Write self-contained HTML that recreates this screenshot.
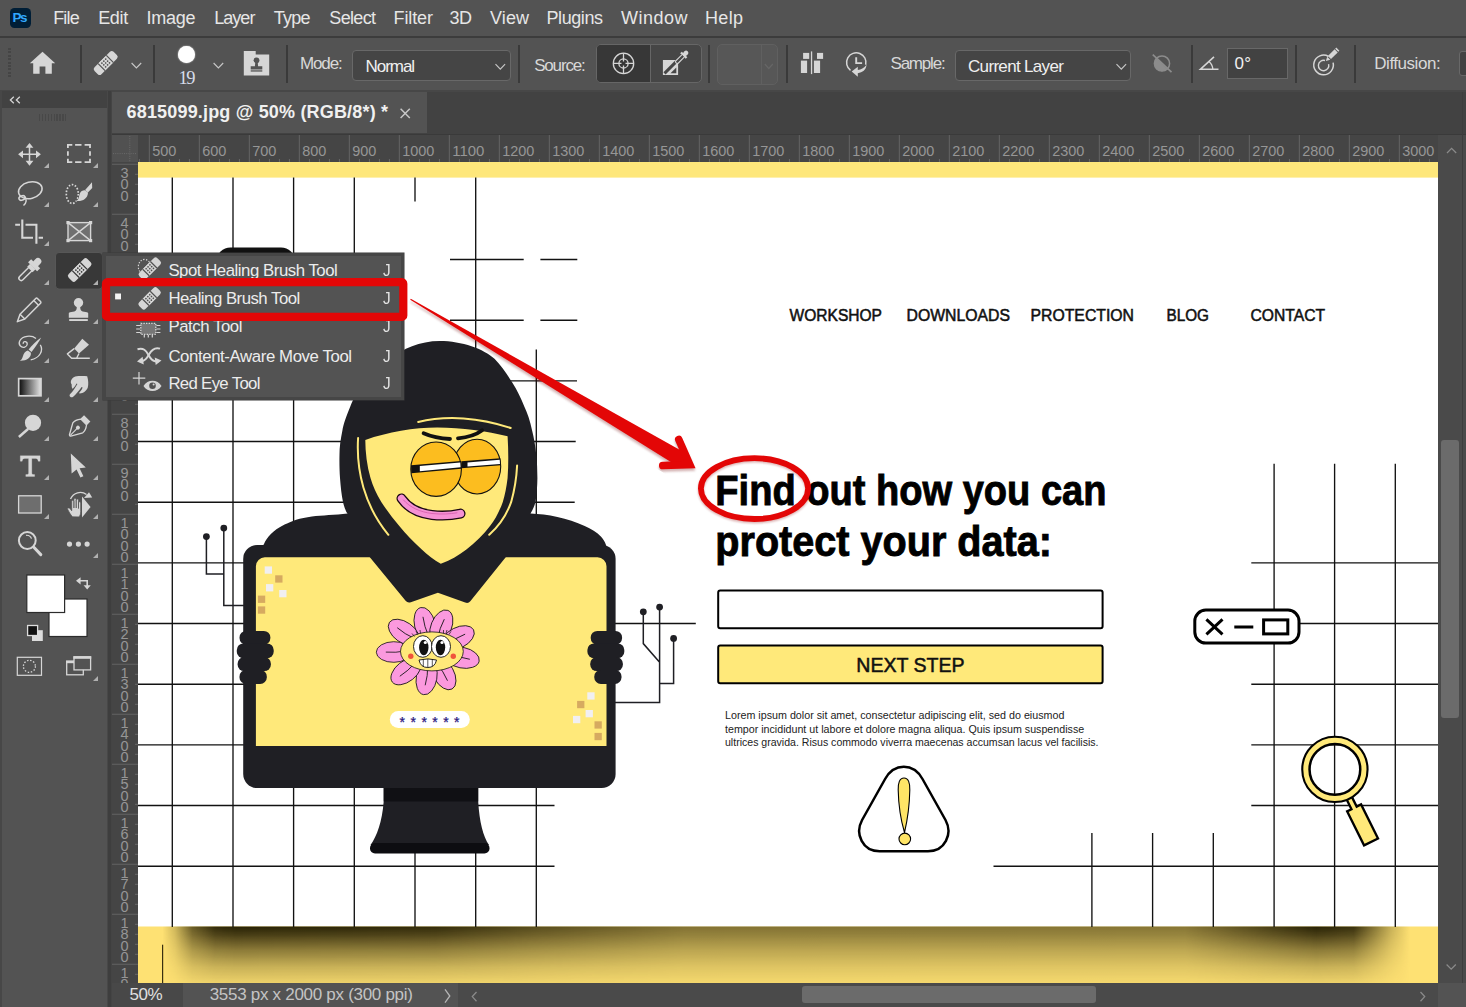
<!DOCTYPE html>
<html lang="en"><head><meta charset="utf-8"><title>Healing Brush Tool</title>
<style>
html,body{margin:0;padding:0;}
body{width:1466px;height:1007px;overflow:hidden;background:#535353;position:relative;font-family:"Liberation Sans",sans-serif;}
.t{position:absolute;white-space:pre;}
.a{position:absolute;}
svg{position:absolute;overflow:visible;}

#menubar{left:0;top:0;width:1466px;height:36px;background:#535353;}
#menuline{left:0;top:36px;width:1466px;height:2px;background:#3c3c3c;}
#optbar{left:0;top:38px;width:1466px;height:52px;background:#535353;}
#optline{left:0;top:90px;width:1466px;height:1.700px;background:#474747;}
#tabbar{left:108px;top:91.700px;width:1358px;height:43.300px;background:#424242;}
#tab{left:111.800px;top:91.700px;width:315.200px;height:41.500px;background:#535353;}
#toolpanel{left:0;top:92px;width:108px;height:915px;background:#535353;}
#toolhead{left:2px;top:90.500px;width:105px;height:17.600px;background:#424242;}
#tooledge{left:106.700px;top:90.500px;width:5.100px;height:917px;background:linear-gradient(90deg,#484848 0 1.500px,#3e3e3e 1.500px 3.600px,#444 3.600px);}
#hruler{left:111.5px;top:135px;width:1326.500px;height:27px;background:#454545;}
#vruler{left:111.5px;top:162px;width:26.500px;height:821px;background:#454545;}
#rcorner{left:111.5px;top:135px;width:26.200px;height:27px;background:#515151;}
#vscroll{left:1438px;top:135px;width:28px;height:848px;background:#4a4a4a;}
#vthumb{left:1441px;top:440px;width:18px;height:278px;background:#6b6b6b;border-radius:3px;}
#status{left:112px;top:983px;width:1354px;height:24px;background:#535353;}
#zoombox{left:112px;top:983px;width:71px;height:24px;background:#484848;}
#hscroll{left:458px;top:983px;width:980px;height:24px;background:#4a4a4a;}
#hthumb{left:802px;top:986px;width:294px;height:17px;background:#6b6b6b;border-radius:3px;}
#scorner{left:1438px;top:983px;width:28px;height:24px;background:#535353;}
.sep{position:absolute;top:45px;width:2px;height:38px;background:#3a3a3a;}
.dd{position:absolute;background:#454545;border:1px solid #686868;border-radius:4px;box-sizing:border-box;}

</style></head><body>
<svg class="a" style="left:138px;top:162px;overflow:hidden" width="1300" height="821" viewBox="138 162 1300 821"><defs><filter id="blur1" x="-10%" y="-100%" width="120%" height="300%"><feGaussianBlur stdDeviation="13"/></filter><clipPath id="bandclip"><rect x="138" y="926.500" width="1300" height="60"/></clipPath></defs><rect x="138" y="162" width="1300" height="821" fill="#fff"/><rect x="138" y="162" width="1300" height="15.600" fill="#fee77b"/><rect x="138" y="926.500" width="1300" height="60" fill="#fee173"/><defs><linearGradient id="shv" x1="0" x2="0" y1="0" y2="1"><stop offset="0" stop-color="#1e1800" stop-opacity="0.960"/><stop offset="0.140" stop-color="#1e1800" stop-opacity="0.820"/><stop offset="0.400" stop-color="#1e1800" stop-opacity="0.520"/><stop offset="0.700" stop-color="#1e1800" stop-opacity="0.240"/><stop offset="1" stop-color="#1e1800" stop-opacity="0.060"/></linearGradient><linearGradient id="shh" x1="0" x2="1" y1="0" y2="0"><stop offset="0.002" stop-color="#fff" stop-opacity="0"/><stop offset="0.012" stop-color="#fff" stop-opacity="0.220"/><stop offset="0.026" stop-color="#fff" stop-opacity="0.700"/><stop offset="0.044" stop-color="#fff" stop-opacity="0.950"/><stop offset="0.060" stop-color="#fff" stop-opacity="1"/><stop offset="0.220" stop-color="#fff" stop-opacity="0.950"/><stop offset="0.300" stop-color="#fff" stop-opacity="0.780"/><stop offset="0.420" stop-color="#fff" stop-opacity="0.580"/><stop offset="0.820" stop-color="#fff" stop-opacity="0.560"/><stop offset="0.895" stop-color="#fff" stop-opacity="0.880"/><stop offset="0.925" stop-color="#fff" stop-opacity="1"/><stop offset="0.955" stop-color="#fff" stop-opacity="0.920"/><stop offset="0.985" stop-color="#fff" stop-opacity="0.250"/><stop offset="1" stop-color="#fff" stop-opacity="0"/></linearGradient><mask id="shm" maskUnits="userSpaceOnUse" x="138" y="900" width="1300" height="100"><rect x="160" y="900" width="1250" height="100" fill="url(#shh)"/></mask></defs><g mask="url(#shm)"><rect x="160" y="926.500" width="1250" height="58" fill="url(#shv)"/></g><rect x="162" y="944.700" width="1.200" height="40" fill="#3a3010"/><g stroke="#121212" stroke-width="1.350" fill="none"><path d="M172.3 177.6V927.0"/><path d="M233.0 177.6V927.0"/><path d="M293.6 177.6V927.0"/><path d="M354.3 177.6V927.0"/><path d="M415.0 177.6V201.5"/><path d="M415.0 780.0V927.0"/><path d="M475.7 177.6V927.0"/><path d="M536.3 349.4V927.0"/><path d="M450.0 259.5H523.7"/><path d="M540.4 259.5H577.3"/><path d="M450.0 320.2H523.7"/><path d="M540.4 320.2H577.3"/><path d="M497.0 380.8H577.0"/><path d="M138.0 441.5H575.7"/><path d="M138.0 502.2H574.7"/><path d="M138.0 562.9H300.0"/><path d="M138.0 623.5H300.0"/><path d="M138.0 684.2H300.0"/><path d="M138.0 744.9H300.0"/><path d="M600.0 623.5H695.8"/><path d="M138.0 805.5H554.5"/><path d="M138.0 866.2H554.5"/><path d="M1274.1 463.7V927.0"/><path d="M1334.6 463.7V927.0"/><path d="M1395.3 463.7V927.0"/><path d="M1091.9 833.0V927.0"/><path d="M1152.6 833.0V927.0"/><path d="M1213.3 833.0V927.0"/><path d="M1251.3 562.9H1438.0"/><path d="M1251.3 623.5H1438.0"/><path d="M1251.3 684.2H1438.0"/><path d="M1251.3 744.9H1438.0"/><path d="M1251.3 805.5H1438.0"/><path d="M993.5 866.2H1438.0"/></g><rect x="216.500" y="247.500" width="78.500" height="30" rx="14" fill="#111"/><g stroke="#1f1f24" stroke-width="1.500" fill="none"><path d="M206.400 536.600V574H223.800M223.800 528.100V605.400H259"/><path d="M643.300 611.800V643.600L659.600 662.300M659.600 607.100V702.600H601M673.600 638.400V683.500H659.600"/></g><circle cx="206.4" cy="536.6" r="3.400" fill="#1f1f24"/><circle cx="223.8" cy="528.1" r="3.400" fill="#1f1f24"/><circle cx="643.3" cy="611.8" r="3.400" fill="#1f1f24"/><circle cx="659.6" cy="607.1" r="3.400" fill="#1f1f24"/><circle cx="673.6" cy="638.4" r="3.400" fill="#1f1f24"/><path d="M383.700 786H478.200V801.500C479.500 822 483 836 489 845H370.500C377 836 382 822 383.700 801.500Z" fill="#1f1f24"/><rect x="383.700" y="786" width="94.500" height="15.500" fill="#101014"/><rect x="370" y="843" width="119.500" height="10.400" rx="5" fill="#0d0d11"/><path d="M439.700 341C420 341 402 349 390.800 358.800C378 370 370 377 364.600 382.700C357 392 353 399 350.300 406.500C346 417 343.500 424 342.400 430.400C340.500 440 339.500 447 339.500 454.200C339.300 463 339.500 471 340 478C340.700 487 341.500 495 343 501.900C344.200 507 346 512 347.600 513.600C335 515 322 515.500 311.900 516.400C300 518 291 521 284.600 524.600C278 528 274 531 270.900 534.100C267.500 537.500 265.500 540.500 264.100 543.700L255 560H610L606 545C605 542 603.500 539.500 601.100 536.800C597 532 591 528.500 584.700 525.900C576 522 567 519 557.400 516.900C548 515 539 514 530.500 513.600C533 509 534.500 506 535.500 501.900C536.800 494 537.300 486 537.400 478C537.400 470 537 462 536.200 454.200C535.400 446 534 438 532.100 430.400C530 421 527.500 413 524.300 406.500C521 398 517 390 512.400 382.700C507.500 375 501.500 366 494.500 358.800C484 349 462 341 439.700 341Z" fill="#1f1f24"/><rect x="243.200" y="545" width="372.400" height="243" rx="14" fill="#1f1f24"/><path d="M255.900 745.900V566.300a9 9 0 0 1 9-9H597.500a9 9 0 0 1 9 9V745.900Z" fill="#ffe97a"/><rect x="239.5" y="630.9" width="30.9" height="13.7" rx="6.600" fill="#1f1f24"/><rect x="236.8" y="643.4" width="36.9" height="14.9" rx="6.600" fill="#1f1f24"/><rect x="237.6" y="657.1" width="33.3" height="14.0" rx="6.600" fill="#1f1f24"/><rect x="239.5" y="669.9" width="27.3" height="14.1" rx="6.600" fill="#1f1f24"/><rect x="590.7" y="630.9" width="31.4" height="13.7" rx="6.600" fill="#1f1f24"/><rect x="587.4" y="643.4" width="36.9" height="14.9" rx="6.600" fill="#1f1f24"/><rect x="590.2" y="657.1" width="32.7" height="14.0" rx="6.600" fill="#1f1f24"/><rect x="594.3" y="669.9" width="27.2" height="14.1" rx="6.600" fill="#1f1f24"/><path d="M368 555L405.600 600.800Q407.600 603.300 410.800 602.200L437.900 592.800L465.200 602.600Q468.300 603.800 470.300 601.200L507.500 555Z" fill="#1f1f24"/><path d="M365.300 439.900C388 432 414 427.500 437.300 427.500C462 427.500 487 431 507.600 436.300C508.500 451 508.500 465 507.600 478C506.500 487 505 495 502.800 501.900C499.500 511 495.500 519 490.200 525.700C483.500 534.500 475.500 542.500 466.400 549.500C458.500 555.500 450 560.500 440.800 563.800C434 560 427.500 555 421.800 549.500C413.500 542 406 534 399.100 525.700C392.500 518 386.500 510 381.300 501.900C376.500 494 372.800 486 370.500 478C367 466 365.300 452 365.300 439.900Z" fill="#ffe97a"/><g stroke="#ffe97a" stroke-width="2" fill="none" stroke-linecap="round"><path d="M418.200 422C432 418.500 448 417.500 463.500 418.400C480 419.500 496 423 510.700 428"/><path d="M358.100 438C357 455 359 472 363.400 487.600C368.500 505 377 521 388.400 534.800"/><path d="M517.100 465.600C516.500 478 514.500 490 511.200 501.900C507 514 499.500 525.500 489.200 534.800"/></g><ellipse cx="477.100" cy="466.600" rx="23.600" ry="27.400" fill="#fcbd1f" stroke="#111" stroke-width="1.100"/><ellipse cx="436.100" cy="469.200" rx="25.300" ry="27.200" fill="#fcbd1f" stroke="#111" stroke-width="1.100"/><path d="M461.300 461.300L500.400 458.300L500.700 465.300L461.300 468.300Z" fill="#111"/><path d="M467.500 462.400L499.700 459.800L500 463.900L467.500 466.600Z" fill="#fff"/><path d="M411 465.200L461 460.900L461.300 468.700L411.300 473.300Z" fill="#111"/><path d="M419.800 466L460.300 462.400L460.600 467.300L419.800 471.300Z" fill="#fff"/><path d="M423.600 433.200C431 436.500 440 438.500 450 439" stroke="#111" stroke-width="3.800" fill="none" stroke-linecap="round"/><path d="M458 438.400C467 437.500 476 435 482.200 430.300" stroke="#111" stroke-width="3.800" fill="none" stroke-linecap="round"/><path d="M401.500 498.500C408 508 420 513.500 432 515C442 516.200 452 515.500 460.500 513.600" stroke="#1a0612" stroke-width="10" fill="none" stroke-linecap="round"/><path d="M401.500 498.500C408 508 420 513.500 432 515C442 516.200 452 515.500 460.500 513.600" stroke="#f591d3" stroke-width="7.400" fill="none" stroke-linecap="round"/><path d="M403.500 500C410 507.500 420 512 432 513.500C442 514.500 450 514 457 512.800" stroke="#d860b0" stroke-width="0.900" fill="none" stroke-linecap="round"/><rect x="264.7" y="566.4" width="7.300" height="7.300" fill="#f1eff2"/><rect x="275.2" y="575.3" width="7.300" height="7.300" fill="#d6aa60"/><rect x="266.0" y="584.1" width="7.300" height="7.300" fill="#f1eff2"/><rect x="279.2" y="590.0" width="7.300" height="7.300" fill="#f1eff2"/><rect x="257.9" y="595.6" width="7.300" height="7.300" fill="#d6aa60"/><rect x="257.9" y="606.4" width="7.300" height="7.300" fill="#d6aa60"/><rect x="587.3" y="692.3" width="7.300" height="7.300" fill="#f1eff2"/><rect x="577.1" y="700.9" width="7.300" height="7.300" fill="#d6aa60"/><rect x="585.6" y="710.0" width="7.300" height="7.300" fill="#f1eff2"/><rect x="573.0" y="715.9" width="7.300" height="7.300" fill="#f1eff2"/><rect x="594.5" y="721.3" width="7.300" height="7.300" fill="#d6aa60"/><rect x="594.5" y="732.9" width="7.300" height="7.300" fill="#d6aa60"/><g stroke="#111" stroke-width="0.800"><g transform="translate(424.8 624.6) rotate(-103.3)"><ellipse cx="0" cy="0" rx="17.500" ry="10.300" fill="#fb99de"/><path d="M-12 1Q-2 -1 8 0" fill="none"/></g><g transform="translate(441.3 626.6) rotate(-67.9)"><ellipse cx="0" cy="0" rx="17.500" ry="10.300" fill="#fb99de"/><path d="M-12 1Q-2 -1 8 0" fill="none"/></g><g transform="translate(458.0 637.8) rotate(-27.0)"><ellipse cx="0" cy="0" rx="17.500" ry="10.300" fill="#fb99de"/><path d="M-12 1Q-2 -1 8 0" fill="none"/></g><g transform="translate(462.0 657.7) rotate(11.4)"><ellipse cx="0" cy="0" rx="17.500" ry="10.300" fill="#fb99de"/><path d="M-12 1Q-2 -1 8 0" fill="none"/></g><g transform="translate(443.6 673.7) rotate(60.9)"><ellipse cx="0" cy="0" rx="17.500" ry="10.300" fill="#fb99de"/><path d="M-12 1Q-2 -1 8 0" fill="none"/></g><g transform="translate(426.6 677.4) rotate(100.1)"><ellipse cx="0" cy="0" rx="17.500" ry="10.300" fill="#fb99de"/><path d="M-12 1Q-2 -1 8 0" fill="none"/></g><g transform="translate(406.1 671.3) rotate(141.8)"><ellipse cx="0" cy="0" rx="17.500" ry="10.300" fill="#fb99de"/><path d="M-12 1Q-2 -1 8 0" fill="none"/></g><g transform="translate(393.8 652.0) rotate(179.3)"><ellipse cx="0" cy="0" rx="17.500" ry="10.300" fill="#fb99de"/><path d="M-12 1Q-2 -1 8 0" fill="none"/></g><g transform="translate(403.8 632.3) rotate(-145.0)"><ellipse cx="0" cy="0" rx="17.500" ry="10.300" fill="#fb99de"/><path d="M-12 1Q-2 -1 8 0" fill="none"/></g><ellipse cx="431.900" cy="651.400" rx="31.400" ry="19.500" fill="#ffe97a"/></g><ellipse cx="422.800" cy="646.500" rx="9.300" ry="10.800" fill="#fff" stroke="#111" stroke-width="0.900"/><ellipse cx="441" cy="646.500" rx="9.500" ry="10.800" fill="#fff" stroke="#111" stroke-width="0.900"/><ellipse cx="423.800" cy="647.500" rx="4.700" ry="7.800" fill="#111"/><ellipse cx="440.500" cy="647.500" rx="4.700" ry="7.800" fill="#111"/><circle cx="425.300" cy="642.500" r="1.600" fill="#fff"/><circle cx="442" cy="642.500" r="1.600" fill="#fff"/><path d="M414.500 636.500l-2.500-3M417.500 634.500l-1.500-3.500M420.500 633.500l-0.500-3.500M449 634.500l2-3.200M446 633.500l1-3.500M443.500 633.500l0-3.500" stroke="#111" stroke-width="0.700" fill="none"/><circle cx="410.800" cy="656.200" r="2.700" fill="#f0543c"/><circle cx="453.300" cy="656.200" r="2.700" fill="#f0543c"/><path d="M419 660Q428 657.800 436.500 660Q435 667.500 427.800 667.500Q420.500 667.500 419 660Z" fill="#fff" stroke="#111" stroke-width="0.900"/><path d="M423.300 659.300V666.300M427.800 659V667.500M432.300 659.300V666.300" stroke="#111" stroke-width="0.700"/><rect x="389.800" y="711.100" width="80" height="17" rx="8.500" fill="#fff"/><text x="399.600" y="726.700" font-family="Liberation Sans, sans-serif" font-size="14" fill="#2c1a80" stroke="#2c1a80" stroke-width="0.250" textLength="59.950" lengthAdjust="spacing">******</text><text x="789.5" y="321.0" font-family="Liberation Sans, sans-serif" font-size="16.8" fill="#111" textLength="92.5" lengthAdjust="spacingAndGlyphs" stroke="#111" stroke-width="0.550">WORKSHOP</text><text x="906.5" y="321.0" font-family="Liberation Sans, sans-serif" font-size="16.8" fill="#111" textLength="103.5" lengthAdjust="spacingAndGlyphs" stroke="#111" stroke-width="0.550">DOWNLOADS</text><text x="1030.5" y="321.0" font-family="Liberation Sans, sans-serif" font-size="16.8" fill="#111" textLength="103.5" lengthAdjust="spacingAndGlyphs" stroke="#111" stroke-width="0.550">PROTECTION</text><text x="1166.5" y="321.0" font-family="Liberation Sans, sans-serif" font-size="16.8" fill="#111" textLength="42.5" lengthAdjust="spacingAndGlyphs" stroke="#111" stroke-width="0.550">BLOG</text><text x="1250.5" y="321.0" font-family="Liberation Sans, sans-serif" font-size="16.8" fill="#111" textLength="74.5" lengthAdjust="spacingAndGlyphs" stroke="#111" stroke-width="0.550">CONTACT</text><text x="715.3" y="505.1" font-family="Liberation Sans, sans-serif" font-size="43" font-weight="bold" fill="#000" textLength="391.2" lengthAdjust="spacingAndGlyphs" stroke="#000" stroke-width="0.900">Find out how you can</text><text x="715.3" y="555.6" font-family="Liberation Sans, sans-serif" font-size="43" font-weight="bold" fill="#000" textLength="336.6" lengthAdjust="spacingAndGlyphs" stroke="#000" stroke-width="0.900">protect your data:</text><rect x="718.200" y="590.600" width="384.400" height="37.600" rx="2" fill="#fff" stroke="#000" stroke-width="2"/><rect x="718.200" y="645.600" width="384.400" height="37.600" rx="2" fill="#ffe97a" stroke="#000" stroke-width="2"/><text x="856.3" y="671.5" font-family="Liberation Sans, sans-serif" font-size="19.5" fill="#111" textLength="108.2" lengthAdjust="spacingAndGlyphs" stroke="#111" stroke-width="0.500">NEXT STEP</text><text x="725.0" y="719.0" font-family="Liberation Sans, sans-serif" font-size="10.4" fill="#222" textLength="339.4" lengthAdjust="spacingAndGlyphs" >Lorem ipsum dolor sit amet, consectetur adipiscing elit, sed do eiusmod</text><text x="725.0" y="732.7" font-family="Liberation Sans, sans-serif" font-size="10.4" fill="#222" textLength="359.2" lengthAdjust="spacingAndGlyphs" >tempor incididunt ut labore et dolore magna aliqua. Quis ipsum suspendisse</text><text x="725.0" y="746.2" font-family="Liberation Sans, sans-serif" font-size="10.4" fill="#222" textLength="373.5" lengthAdjust="spacingAndGlyphs" >ultrices gravida. Risus commodo viverra maecenas accumsan lacus vel facilisis.</text><path d="M903.800 766.800C912 766.800 918 771 922.500 779L945.500 820C953 834 945 851.300 928 851.300H879.600C862.600 851.300 854.600 834 862.100 820L885.100 779C889.600 771 895.600 766.800 903.800 766.800Z" fill="#fff" stroke="#000" stroke-width="2.500"/><path d="M904 778C908.500 778 910 783 909.800 790C909.500 806 906.500 824 904.500 832.500C902 824 898.500 806 898.200 790C898 783 899.500 778 904 778Z" fill="#ffe566" stroke="#000" stroke-width="1.100"/><circle cx="904.800" cy="838.900" r="5.800" fill="#ffe566" stroke="#000" stroke-width="1.100"/><rect x="1194.800" y="610.100" width="104.200" height="33" rx="11" fill="#fff" stroke="#000" stroke-width="3"/><path d="M1206.400 619.400L1222.500 634.400M1222.500 619.400L1206.400 634.400M1234.300 626.900H1253.300" stroke="#000" stroke-width="3" fill="none"/><rect x="1263.600" y="619.900" width="24.200" height="14" fill="#fff" stroke="#000" stroke-width="3"/><g transform="translate(1334.900 769.400)"><g transform="rotate(-26.500)"><path d="M-2.900 28V43H-7.800V81H7.800V43H2.900V28Z" fill="#ffe97a" stroke="#000" stroke-width="2.300" stroke-linejoin="miter"/></g><circle r="28.900" fill="none" stroke="#000" stroke-width="9.600"/><circle r="29.100" fill="none" stroke="#ffe97a" stroke-width="5"/></g></svg>
<div class="a" id="menubar"></div><div class="a" id="menuline"></div>
<div class="a" id="optbar"></div><div class="a" id="optline"></div>
<div class="a" style="left:9.5px;top:7.5px;width:21px;height:20px;border-radius:4.5px;background:#001e36;"></div>
<span class="t" style="left:12.6px;top:11.2px;font-size:13.5px;line-height:13.5px;color:#31a8ff;letter-spacing:-1.51px;font-family:'Liberation Sans',sans-serif;font-weight:bold;">Ps</span>
<span class="t" style="left:53.2px;top:8.8px;font-size:18px;line-height:18px;color:#e6e6e6;letter-spacing:-0.84px;font-family:'Liberation Sans',sans-serif;">File</span>
<span class="t" style="left:98.2px;top:8.8px;font-size:18px;line-height:18px;color:#e6e6e6;letter-spacing:-0.34px;font-family:'Liberation Sans',sans-serif;">Edit</span>
<span class="t" style="left:146.5px;top:8.8px;font-size:18px;line-height:18px;color:#e6e6e6;letter-spacing:-0.28px;font-family:'Liberation Sans',sans-serif;">Image</span>
<span class="t" style="left:214.2px;top:8.8px;font-size:18px;line-height:18px;color:#e6e6e6;letter-spacing:-0.96px;font-family:'Liberation Sans',sans-serif;">Layer</span>
<span class="t" style="left:273.7px;top:8.8px;font-size:18px;line-height:18px;color:#e6e6e6;letter-spacing:-0.74px;font-family:'Liberation Sans',sans-serif;">Type</span>
<span class="t" style="left:329.3px;top:8.8px;font-size:18px;line-height:18px;color:#e6e6e6;letter-spacing:-0.67px;font-family:'Liberation Sans',sans-serif;">Select</span>
<span class="t" style="left:393.5px;top:8.8px;font-size:18px;line-height:18px;color:#e6e6e6;letter-spacing:-0.10px;font-family:'Liberation Sans',sans-serif;">Filter</span>
<span class="t" style="left:449.5px;top:8.8px;font-size:18px;line-height:18px;color:#e6e6e6;letter-spacing:-0.51px;font-family:'Liberation Sans',sans-serif;">3D</span>
<span class="t" style="left:490.0px;top:8.8px;font-size:18px;line-height:18px;color:#e6e6e6;letter-spacing:0.10px;font-family:'Liberation Sans',sans-serif;">View</span>
<span class="t" style="left:546.5px;top:8.8px;font-size:18px;line-height:18px;color:#e6e6e6;letter-spacing:-0.42px;font-family:'Liberation Sans',sans-serif;">Plugins</span>
<span class="t" style="left:621.0px;top:8.8px;font-size:18px;line-height:18px;color:#e6e6e6;letter-spacing:0.50px;font-family:'Liberation Sans',sans-serif;">Window</span>
<span class="t" style="left:705.0px;top:8.8px;font-size:18px;line-height:18px;color:#e6e6e6;letter-spacing:0.33px;font-family:'Liberation Sans',sans-serif;">Help</span>
<div class="sep" style="left:80px"></div>
<div class="sep" style="left:153px"></div>
<div class="sep" style="left:285.5px"></div>
<div class="sep" style="left:518px"></div>
<div class="sep" style="left:708px"></div>
<div class="sep" style="left:785.5px"></div>
<div class="sep" style="left:1190.5px"></div>
<div class="sep" style="left:1295px"></div>
<div class="sep" style="left:1353.5px"></div>
<div class="a" style="left:8px;top:48px;width:3px;height:31px;background:repeating-linear-gradient(#454545 0 2px,#535353 2px 3.4px);"></div>
<span class="t" style="left:178.6px;top:68.7px;font-size:18.5px;line-height:18.5px;color:#d6dcea;letter-spacing:-1.70px;font-family:'Liberation Serif',serif;">19</span>
<div class="a" style="left:177.7px;top:45.8px;width:17.4px;height:17.4px;border-radius:50%;background:#fff;box-shadow:0 0 1.5px #fff;"></div>
<span class="t" style="left:300.0px;top:54.9px;font-size:17px;line-height:17px;color:#d8d8d8;letter-spacing:-1.14px;font-family:'Liberation Sans',sans-serif;">Mode:</span>
<div class="dd" style="left:352px;top:50px;width:159px;height:31px;"></div>
<span class="t" style="left:365.5px;top:57.9px;font-size:17px;line-height:17px;color:#f0f0f0;letter-spacing:-1.04px;font-family:'Liberation Sans',sans-serif;">Normal</span>
<span class="t" style="left:534.2px;top:57.1px;font-size:17px;line-height:17px;color:#d8d8d8;letter-spacing:-1.18px;font-family:'Liberation Sans',sans-serif;">Source:</span>
<div class="a" style="left:596px;top:44px;width:106px;height:39px;border-radius:5px;background:#464646;border:1px solid #666;box-sizing:border-box;overflow:hidden;"><div style="position:absolute;left:0;top:0;width:52.500px;height:39px;background:#373737;border-right:1px solid #666;"></div></div>
<div class="a" style="left:717px;top:43.5px;width:61px;height:41px;border-radius:5px;background:#575757;border:1px solid #606060;box-sizing:border-box;"><div style="position:absolute;left:42.5px;top:0;width:1px;height:39px;background:#606060;"></div></div>
<span class="t" style="left:890.5px;top:54.9px;font-size:17px;line-height:17px;color:#d8d8d8;letter-spacing:-1.21px;font-family:'Liberation Sans',sans-serif;">Sample:</span>
<div class="dd" style="left:955px;top:50px;width:176px;height:31px;"></div>
<span class="t" style="left:968.0px;top:57.9px;font-size:17px;line-height:17px;color:#f0f0f0;letter-spacing:-0.67px;font-family:'Liberation Sans',sans-serif;">Current Layer</span>
<div class="a" style="left:1227px;top:48px;width:61px;height:31px;background:#424242;border:1px solid #686868;box-sizing:border-box;"></div>
<span class="t" style="left:1234.4px;top:54.9px;font-size:17px;line-height:17px;color:#f0f0f0;letter-spacing:0.35px;font-family:'Liberation Sans',sans-serif;">0°</span>
<span class="t" style="left:1374.3px;top:54.9px;font-size:17px;line-height:17px;color:#d8d8d8;letter-spacing:-0.47px;font-family:'Liberation Sans',sans-serif;">Diffusion:</span>
<div class="a" style="left:1459px;top:51px;width:12px;height:25px;background:#424242;border:1px solid #686868;border-radius:3px;box-sizing:border-box;"></div>
<div class="a" id="tabbar"></div><div class="a" id="tab"></div>
<span class="t" style="left:126.5px;top:102.7px;font-size:18px;line-height:18px;color:#f0f0f0;letter-spacing:0.18px;font-family:'Liberation Sans',sans-serif;font-weight:bold;">6815099.jpg @ 50% (RGB/8*) *</span>
<div class="a" id="toolpanel"></div><div class="a" id="tooledge"></div><div class="a" id="toolhead"></div>
<svg class="a" style="left:0;top:0" width="40" height="110"><path d="M13.800 96.800l-3.400 3.200 3.400 3.200M19.800 96.800l-3.400 3.200 3.400 3.200" stroke="#d4d4d4" stroke-width="1.300" fill="none"/></svg>
<div class="a" style="left:38.500px;top:113.500px;width:29px;height:7px;background:repeating-linear-gradient(90deg,#484848 0 1.3px,#535353 1.3px 2.9px);"></div>
<div class="a" id="hruler"></div><div class="a" id="vruler"></div><div class="a" id="rcorner"></div>
<svg class="a" style="left:0;top:0" width="1466" height="1007" viewBox="0 0 1466 1007"><rect x="148.8" y="135" width="1.2" height="27" fill="#5e5e5e"/><text x="152.2" y="156.0" font-family="Liberation Sans, sans-serif" font-size="15.5" fill="#969696" textLength="24.2" lengthAdjust="spacingAndGlyphs" >500</text><rect x="158.9" y="159" width="1" height="3" fill="#686868"/><rect x="168.9" y="159" width="1" height="3" fill="#686868"/><rect x="178.9" y="159" width="1" height="3" fill="#686868"/><rect x="188.9" y="159" width="1" height="3" fill="#686868"/><rect x="198.8" y="135" width="1.2" height="27" fill="#5e5e5e"/><text x="202.2" y="156.0" font-family="Liberation Sans, sans-serif" font-size="15.5" fill="#969696" textLength="24.2" lengthAdjust="spacingAndGlyphs" >600</text><rect x="208.9" y="159" width="1" height="3" fill="#686868"/><rect x="218.9" y="159" width="1" height="3" fill="#686868"/><rect x="228.9" y="159" width="1" height="3" fill="#686868"/><rect x="238.9" y="159" width="1" height="3" fill="#686868"/><rect x="248.8" y="135" width="1.2" height="27" fill="#5e5e5e"/><text x="252.2" y="156.0" font-family="Liberation Sans, sans-serif" font-size="15.5" fill="#969696" textLength="24.2" lengthAdjust="spacingAndGlyphs" >700</text><rect x="258.9" y="159" width="1" height="3" fill="#686868"/><rect x="268.9" y="159" width="1" height="3" fill="#686868"/><rect x="278.9" y="159" width="1" height="3" fill="#686868"/><rect x="288.9" y="159" width="1" height="3" fill="#686868"/><rect x="298.8" y="135" width="1.2" height="27" fill="#5e5e5e"/><text x="302.2" y="156.0" font-family="Liberation Sans, sans-serif" font-size="15.5" fill="#969696" textLength="24.1" lengthAdjust="spacingAndGlyphs" >800</text><rect x="308.9" y="159" width="1" height="3" fill="#686868"/><rect x="318.9" y="159" width="1" height="3" fill="#686868"/><rect x="328.9" y="159" width="1" height="3" fill="#686868"/><rect x="338.9" y="159" width="1" height="3" fill="#686868"/><rect x="348.8" y="135" width="1.2" height="27" fill="#5e5e5e"/><text x="352.2" y="156.0" font-family="Liberation Sans, sans-serif" font-size="15.5" fill="#969696" textLength="24.1" lengthAdjust="spacingAndGlyphs" >900</text><rect x="358.9" y="159" width="1" height="3" fill="#686868"/><rect x="368.9" y="159" width="1" height="3" fill="#686868"/><rect x="378.9" y="159" width="1" height="3" fill="#686868"/><rect x="388.9" y="159" width="1" height="3" fill="#686868"/><rect x="398.8" y="135" width="1.2" height="27" fill="#5e5e5e"/><text x="402.2" y="156.0" font-family="Liberation Sans, sans-serif" font-size="15.5" fill="#969696" textLength="32.2" lengthAdjust="spacingAndGlyphs" >1000</text><rect x="408.9" y="159" width="1" height="3" fill="#686868"/><rect x="418.9" y="159" width="1" height="3" fill="#686868"/><rect x="428.9" y="159" width="1" height="3" fill="#686868"/><rect x="438.9" y="159" width="1" height="3" fill="#686868"/><rect x="448.8" y="135" width="1.2" height="27" fill="#5e5e5e"/><text x="452.2" y="156.0" font-family="Liberation Sans, sans-serif" font-size="15.5" fill="#969696" textLength="32.2" lengthAdjust="spacingAndGlyphs" >1100</text><rect x="458.9" y="159" width="1" height="3" fill="#686868"/><rect x="468.9" y="159" width="1" height="3" fill="#686868"/><rect x="478.9" y="159" width="1" height="3" fill="#686868"/><rect x="488.9" y="159" width="1" height="3" fill="#686868"/><rect x="498.8" y="135" width="1.2" height="27" fill="#5e5e5e"/><text x="502.2" y="156.0" font-family="Liberation Sans, sans-serif" font-size="15.5" fill="#969696" textLength="32.2" lengthAdjust="spacingAndGlyphs" >1200</text><rect x="508.9" y="159" width="1" height="3" fill="#686868"/><rect x="518.9" y="159" width="1" height="3" fill="#686868"/><rect x="528.9" y="159" width="1" height="3" fill="#686868"/><rect x="538.9" y="159" width="1" height="3" fill="#686868"/><rect x="548.8" y="135" width="1.2" height="27" fill="#5e5e5e"/><text x="552.2" y="156.0" font-family="Liberation Sans, sans-serif" font-size="15.5" fill="#969696" textLength="32.2" lengthAdjust="spacingAndGlyphs" >1300</text><rect x="558.9" y="159" width="1" height="3" fill="#686868"/><rect x="568.9" y="159" width="1" height="3" fill="#686868"/><rect x="578.9" y="159" width="1" height="3" fill="#686868"/><rect x="588.9" y="159" width="1" height="3" fill="#686868"/><rect x="598.8" y="135" width="1.2" height="27" fill="#5e5e5e"/><text x="602.2" y="156.0" font-family="Liberation Sans, sans-serif" font-size="15.5" fill="#969696" textLength="32.2" lengthAdjust="spacingAndGlyphs" >1400</text><rect x="608.9" y="159" width="1" height="3" fill="#686868"/><rect x="618.9" y="159" width="1" height="3" fill="#686868"/><rect x="628.9" y="159" width="1" height="3" fill="#686868"/><rect x="638.9" y="159" width="1" height="3" fill="#686868"/><rect x="648.8" y="135" width="1.2" height="27" fill="#5e5e5e"/><text x="652.2" y="156.0" font-family="Liberation Sans, sans-serif" font-size="15.5" fill="#969696" textLength="32.2" lengthAdjust="spacingAndGlyphs" >1500</text><rect x="658.9" y="159" width="1" height="3" fill="#686868"/><rect x="668.9" y="159" width="1" height="3" fill="#686868"/><rect x="678.9" y="159" width="1" height="3" fill="#686868"/><rect x="688.9" y="159" width="1" height="3" fill="#686868"/><rect x="698.8" y="135" width="1.2" height="27" fill="#5e5e5e"/><text x="702.2" y="156.0" font-family="Liberation Sans, sans-serif" font-size="15.5" fill="#969696" textLength="32.2" lengthAdjust="spacingAndGlyphs" >1600</text><rect x="708.9" y="159" width="1" height="3" fill="#686868"/><rect x="718.9" y="159" width="1" height="3" fill="#686868"/><rect x="728.9" y="159" width="1" height="3" fill="#686868"/><rect x="738.9" y="159" width="1" height="3" fill="#686868"/><rect x="748.8" y="135" width="1.2" height="27" fill="#5e5e5e"/><text x="752.2" y="156.0" font-family="Liberation Sans, sans-serif" font-size="15.5" fill="#969696" textLength="32.2" lengthAdjust="spacingAndGlyphs" >1700</text><rect x="758.9" y="159" width="1" height="3" fill="#686868"/><rect x="768.9" y="159" width="1" height="3" fill="#686868"/><rect x="778.9" y="159" width="1" height="3" fill="#686868"/><rect x="788.9" y="159" width="1" height="3" fill="#686868"/><rect x="798.8" y="135" width="1.2" height="27" fill="#5e5e5e"/><text x="802.2" y="156.0" font-family="Liberation Sans, sans-serif" font-size="15.5" fill="#969696" textLength="32.2" lengthAdjust="spacingAndGlyphs" >1800</text><rect x="808.9" y="159" width="1" height="3" fill="#686868"/><rect x="818.9" y="159" width="1" height="3" fill="#686868"/><rect x="828.9" y="159" width="1" height="3" fill="#686868"/><rect x="838.9" y="159" width="1" height="3" fill="#686868"/><rect x="848.8" y="135" width="1.2" height="27" fill="#5e5e5e"/><text x="852.2" y="156.0" font-family="Liberation Sans, sans-serif" font-size="15.5" fill="#969696" textLength="32.2" lengthAdjust="spacingAndGlyphs" >1900</text><rect x="858.9" y="159" width="1" height="3" fill="#686868"/><rect x="868.9" y="159" width="1" height="3" fill="#686868"/><rect x="878.9" y="159" width="1" height="3" fill="#686868"/><rect x="888.9" y="159" width="1" height="3" fill="#686868"/><rect x="898.8" y="135" width="1.2" height="27" fill="#5e5e5e"/><text x="902.2" y="156.0" font-family="Liberation Sans, sans-serif" font-size="15.5" fill="#969696" textLength="32.2" lengthAdjust="spacingAndGlyphs" >2000</text><rect x="908.9" y="159" width="1" height="3" fill="#686868"/><rect x="918.9" y="159" width="1" height="3" fill="#686868"/><rect x="928.9" y="159" width="1" height="3" fill="#686868"/><rect x="938.9" y="159" width="1" height="3" fill="#686868"/><rect x="948.8" y="135" width="1.2" height="27" fill="#5e5e5e"/><text x="952.2" y="156.0" font-family="Liberation Sans, sans-serif" font-size="15.5" fill="#969696" textLength="32.2" lengthAdjust="spacingAndGlyphs" >2100</text><rect x="958.9" y="159" width="1" height="3" fill="#686868"/><rect x="968.9" y="159" width="1" height="3" fill="#686868"/><rect x="978.9" y="159" width="1" height="3" fill="#686868"/><rect x="988.9" y="159" width="1" height="3" fill="#686868"/><rect x="998.8" y="135" width="1.2" height="27" fill="#5e5e5e"/><text x="1002.2" y="156.0" font-family="Liberation Sans, sans-serif" font-size="15.5" fill="#969696" textLength="32.2" lengthAdjust="spacingAndGlyphs" >2200</text><rect x="1008.9" y="159" width="1" height="3" fill="#686868"/><rect x="1018.9" y="159" width="1" height="3" fill="#686868"/><rect x="1028.9" y="159" width="1" height="3" fill="#686868"/><rect x="1038.9" y="159" width="1" height="3" fill="#686868"/><rect x="1048.8" y="135" width="1.2" height="27" fill="#5e5e5e"/><text x="1052.2" y="156.0" font-family="Liberation Sans, sans-serif" font-size="15.5" fill="#969696" textLength="32.2" lengthAdjust="spacingAndGlyphs" >2300</text><rect x="1058.9" y="159" width="1" height="3" fill="#686868"/><rect x="1068.9" y="159" width="1" height="3" fill="#686868"/><rect x="1078.9" y="159" width="1" height="3" fill="#686868"/><rect x="1088.9" y="159" width="1" height="3" fill="#686868"/><rect x="1098.8" y="135" width="1.2" height="27" fill="#5e5e5e"/><text x="1102.2" y="156.0" font-family="Liberation Sans, sans-serif" font-size="15.5" fill="#969696" textLength="32.2" lengthAdjust="spacingAndGlyphs" >2400</text><rect x="1108.9" y="159" width="1" height="3" fill="#686868"/><rect x="1118.9" y="159" width="1" height="3" fill="#686868"/><rect x="1128.9" y="159" width="1" height="3" fill="#686868"/><rect x="1138.9" y="159" width="1" height="3" fill="#686868"/><rect x="1148.8" y="135" width="1.2" height="27" fill="#5e5e5e"/><text x="1152.2" y="156.0" font-family="Liberation Sans, sans-serif" font-size="15.5" fill="#969696" textLength="32.2" lengthAdjust="spacingAndGlyphs" >2500</text><rect x="1158.9" y="159" width="1" height="3" fill="#686868"/><rect x="1168.9" y="159" width="1" height="3" fill="#686868"/><rect x="1178.9" y="159" width="1" height="3" fill="#686868"/><rect x="1188.9" y="159" width="1" height="3" fill="#686868"/><rect x="1198.8" y="135" width="1.2" height="27" fill="#5e5e5e"/><text x="1202.2" y="156.0" font-family="Liberation Sans, sans-serif" font-size="15.5" fill="#969696" textLength="32.2" lengthAdjust="spacingAndGlyphs" >2600</text><rect x="1208.9" y="159" width="1" height="3" fill="#686868"/><rect x="1218.9" y="159" width="1" height="3" fill="#686868"/><rect x="1228.9" y="159" width="1" height="3" fill="#686868"/><rect x="1238.9" y="159" width="1" height="3" fill="#686868"/><rect x="1248.8" y="135" width="1.2" height="27" fill="#5e5e5e"/><text x="1252.2" y="156.0" font-family="Liberation Sans, sans-serif" font-size="15.5" fill="#969696" textLength="32.2" lengthAdjust="spacingAndGlyphs" >2700</text><rect x="1258.9" y="159" width="1" height="3" fill="#686868"/><rect x="1268.9" y="159" width="1" height="3" fill="#686868"/><rect x="1278.9" y="159" width="1" height="3" fill="#686868"/><rect x="1288.9" y="159" width="1" height="3" fill="#686868"/><rect x="1298.8" y="135" width="1.2" height="27" fill="#5e5e5e"/><text x="1302.2" y="156.0" font-family="Liberation Sans, sans-serif" font-size="15.5" fill="#969696" textLength="32.2" lengthAdjust="spacingAndGlyphs" >2800</text><rect x="1308.9" y="159" width="1" height="3" fill="#686868"/><rect x="1318.9" y="159" width="1" height="3" fill="#686868"/><rect x="1328.9" y="159" width="1" height="3" fill="#686868"/><rect x="1338.9" y="159" width="1" height="3" fill="#686868"/><rect x="1348.8" y="135" width="1.2" height="27" fill="#5e5e5e"/><text x="1352.2" y="156.0" font-family="Liberation Sans, sans-serif" font-size="15.5" fill="#969696" textLength="32.2" lengthAdjust="spacingAndGlyphs" >2900</text><rect x="1358.9" y="159" width="1" height="3" fill="#686868"/><rect x="1368.9" y="159" width="1" height="3" fill="#686868"/><rect x="1378.9" y="159" width="1" height="3" fill="#686868"/><rect x="1388.9" y="159" width="1" height="3" fill="#686868"/><rect x="1398.8" y="135" width="1.2" height="27" fill="#5e5e5e"/><text x="1402.2" y="156.0" font-family="Liberation Sans, sans-serif" font-size="15.5" fill="#969696" textLength="32.2" lengthAdjust="spacingAndGlyphs" >3000</text><rect x="1408.9" y="159" width="1" height="3" fill="#686868"/><rect x="1418.9" y="159" width="1" height="3" fill="#686868"/><rect x="1428.9" y="159" width="1" height="3" fill="#686868"/><rect x="138.900" y="159" width="1" height="3" fill="#686868"/><rect x="112" y="163.7" width="26" height="1.2" fill="#5e5e5e"/><text x="120.5" y="177.8" font-family="Liberation Sans, sans-serif" font-size="14.5" fill="#969696" >3</text><text x="120.5" y="189.2" font-family="Liberation Sans, sans-serif" font-size="14.5" fill="#969696" >0</text><text x="120.5" y="200.6" font-family="Liberation Sans, sans-serif" font-size="14.5" fill="#969696" >0</text><rect x="135" y="173.8" width="3" height="1" fill="#686868"/><rect x="135" y="183.8" width="3" height="1" fill="#686868"/><rect x="135" y="193.8" width="3" height="1" fill="#686868"/><rect x="135" y="203.8" width="3" height="1" fill="#686868"/><rect x="112" y="213.7" width="26" height="1.2" fill="#5e5e5e"/><text x="120.5" y="227.8" font-family="Liberation Sans, sans-serif" font-size="14.5" fill="#969696" >4</text><text x="120.5" y="239.2" font-family="Liberation Sans, sans-serif" font-size="14.5" fill="#969696" >0</text><text x="120.5" y="250.6" font-family="Liberation Sans, sans-serif" font-size="14.5" fill="#969696" >0</text><rect x="135" y="223.8" width="3" height="1" fill="#686868"/><rect x="135" y="233.8" width="3" height="1" fill="#686868"/><rect x="135" y="243.8" width="3" height="1" fill="#686868"/><rect x="135" y="253.8" width="3" height="1" fill="#686868"/><rect x="112" y="263.7" width="26" height="1.2" fill="#5e5e5e"/><text x="120.5" y="277.8" font-family="Liberation Sans, sans-serif" font-size="14.5" fill="#969696" >5</text><text x="120.5" y="289.2" font-family="Liberation Sans, sans-serif" font-size="14.5" fill="#969696" >0</text><text x="120.5" y="300.6" font-family="Liberation Sans, sans-serif" font-size="14.5" fill="#969696" >0</text><rect x="135" y="273.8" width="3" height="1" fill="#686868"/><rect x="135" y="283.8" width="3" height="1" fill="#686868"/><rect x="135" y="293.8" width="3" height="1" fill="#686868"/><rect x="135" y="303.8" width="3" height="1" fill="#686868"/><rect x="112" y="313.7" width="26" height="1.2" fill="#5e5e5e"/><text x="120.5" y="327.8" font-family="Liberation Sans, sans-serif" font-size="14.5" fill="#969696" >6</text><text x="120.5" y="339.2" font-family="Liberation Sans, sans-serif" font-size="14.5" fill="#969696" >0</text><text x="120.5" y="350.6" font-family="Liberation Sans, sans-serif" font-size="14.5" fill="#969696" >0</text><rect x="135" y="323.8" width="3" height="1" fill="#686868"/><rect x="135" y="333.8" width="3" height="1" fill="#686868"/><rect x="135" y="343.8" width="3" height="1" fill="#686868"/><rect x="135" y="353.8" width="3" height="1" fill="#686868"/><rect x="112" y="363.7" width="26" height="1.2" fill="#5e5e5e"/><text x="120.5" y="377.8" font-family="Liberation Sans, sans-serif" font-size="14.5" fill="#969696" >7</text><text x="120.5" y="389.2" font-family="Liberation Sans, sans-serif" font-size="14.5" fill="#969696" >0</text><text x="120.5" y="400.6" font-family="Liberation Sans, sans-serif" font-size="14.5" fill="#969696" >0</text><rect x="135" y="373.8" width="3" height="1" fill="#686868"/><rect x="135" y="383.8" width="3" height="1" fill="#686868"/><rect x="135" y="393.8" width="3" height="1" fill="#686868"/><rect x="135" y="403.8" width="3" height="1" fill="#686868"/><rect x="112" y="413.7" width="26" height="1.2" fill="#5e5e5e"/><text x="120.5" y="427.8" font-family="Liberation Sans, sans-serif" font-size="14.5" fill="#969696" >8</text><text x="120.5" y="439.2" font-family="Liberation Sans, sans-serif" font-size="14.5" fill="#969696" >0</text><text x="120.5" y="450.6" font-family="Liberation Sans, sans-serif" font-size="14.5" fill="#969696" >0</text><rect x="135" y="423.8" width="3" height="1" fill="#686868"/><rect x="135" y="433.8" width="3" height="1" fill="#686868"/><rect x="135" y="443.8" width="3" height="1" fill="#686868"/><rect x="135" y="453.8" width="3" height="1" fill="#686868"/><rect x="112" y="463.7" width="26" height="1.2" fill="#5e5e5e"/><text x="120.5" y="477.8" font-family="Liberation Sans, sans-serif" font-size="14.5" fill="#969696" >9</text><text x="120.5" y="489.2" font-family="Liberation Sans, sans-serif" font-size="14.5" fill="#969696" >0</text><text x="120.5" y="500.6" font-family="Liberation Sans, sans-serif" font-size="14.5" fill="#969696" >0</text><rect x="135" y="473.8" width="3" height="1" fill="#686868"/><rect x="135" y="483.8" width="3" height="1" fill="#686868"/><rect x="135" y="493.8" width="3" height="1" fill="#686868"/><rect x="135" y="503.8" width="3" height="1" fill="#686868"/><rect x="112" y="513.7" width="26" height="1.2" fill="#5e5e5e"/><text x="120.5" y="527.8" font-family="Liberation Sans, sans-serif" font-size="14.5" fill="#969696" >1</text><text x="120.5" y="539.2" font-family="Liberation Sans, sans-serif" font-size="14.5" fill="#969696" >0</text><text x="120.5" y="550.6" font-family="Liberation Sans, sans-serif" font-size="14.5" fill="#969696" >0</text><text x="120.5" y="562.0" font-family="Liberation Sans, sans-serif" font-size="14.5" fill="#969696" >0</text><rect x="135" y="523.8" width="3" height="1" fill="#686868"/><rect x="135" y="533.8" width="3" height="1" fill="#686868"/><rect x="135" y="543.8" width="3" height="1" fill="#686868"/><rect x="135" y="553.8" width="3" height="1" fill="#686868"/><rect x="112" y="563.7" width="26" height="1.2" fill="#5e5e5e"/><text x="120.5" y="577.8" font-family="Liberation Sans, sans-serif" font-size="14.5" fill="#969696" >1</text><text x="120.5" y="589.2" font-family="Liberation Sans, sans-serif" font-size="14.5" fill="#969696" >1</text><text x="120.5" y="600.6" font-family="Liberation Sans, sans-serif" font-size="14.5" fill="#969696" >0</text><text x="120.5" y="612.0" font-family="Liberation Sans, sans-serif" font-size="14.5" fill="#969696" >0</text><rect x="135" y="573.8" width="3" height="1" fill="#686868"/><rect x="135" y="583.8" width="3" height="1" fill="#686868"/><rect x="135" y="593.8" width="3" height="1" fill="#686868"/><rect x="135" y="603.8" width="3" height="1" fill="#686868"/><rect x="112" y="613.7" width="26" height="1.2" fill="#5e5e5e"/><text x="120.5" y="627.8" font-family="Liberation Sans, sans-serif" font-size="14.5" fill="#969696" >1</text><text x="120.5" y="639.2" font-family="Liberation Sans, sans-serif" font-size="14.5" fill="#969696" >2</text><text x="120.5" y="650.6" font-family="Liberation Sans, sans-serif" font-size="14.5" fill="#969696" >0</text><text x="120.5" y="662.0" font-family="Liberation Sans, sans-serif" font-size="14.5" fill="#969696" >0</text><rect x="135" y="623.8" width="3" height="1" fill="#686868"/><rect x="135" y="633.8" width="3" height="1" fill="#686868"/><rect x="135" y="643.8" width="3" height="1" fill="#686868"/><rect x="135" y="653.8" width="3" height="1" fill="#686868"/><rect x="112" y="663.7" width="26" height="1.2" fill="#5e5e5e"/><text x="120.5" y="677.8" font-family="Liberation Sans, sans-serif" font-size="14.5" fill="#969696" >1</text><text x="120.5" y="689.2" font-family="Liberation Sans, sans-serif" font-size="14.5" fill="#969696" >3</text><text x="120.5" y="700.6" font-family="Liberation Sans, sans-serif" font-size="14.5" fill="#969696" >0</text><text x="120.5" y="712.0" font-family="Liberation Sans, sans-serif" font-size="14.5" fill="#969696" >0</text><rect x="135" y="673.8" width="3" height="1" fill="#686868"/><rect x="135" y="683.8" width="3" height="1" fill="#686868"/><rect x="135" y="693.8" width="3" height="1" fill="#686868"/><rect x="135" y="703.8" width="3" height="1" fill="#686868"/><rect x="112" y="713.7" width="26" height="1.2" fill="#5e5e5e"/><text x="120.5" y="727.8" font-family="Liberation Sans, sans-serif" font-size="14.5" fill="#969696" >1</text><text x="120.5" y="739.2" font-family="Liberation Sans, sans-serif" font-size="14.5" fill="#969696" >4</text><text x="120.5" y="750.6" font-family="Liberation Sans, sans-serif" font-size="14.5" fill="#969696" >0</text><text x="120.5" y="762.0" font-family="Liberation Sans, sans-serif" font-size="14.5" fill="#969696" >0</text><rect x="135" y="723.8" width="3" height="1" fill="#686868"/><rect x="135" y="733.8" width="3" height="1" fill="#686868"/><rect x="135" y="743.8" width="3" height="1" fill="#686868"/><rect x="135" y="753.8" width="3" height="1" fill="#686868"/><rect x="112" y="763.7" width="26" height="1.2" fill="#5e5e5e"/><text x="120.5" y="777.8" font-family="Liberation Sans, sans-serif" font-size="14.5" fill="#969696" >1</text><text x="120.5" y="789.2" font-family="Liberation Sans, sans-serif" font-size="14.5" fill="#969696" >5</text><text x="120.5" y="800.6" font-family="Liberation Sans, sans-serif" font-size="14.5" fill="#969696" >0</text><text x="120.5" y="812.0" font-family="Liberation Sans, sans-serif" font-size="14.5" fill="#969696" >0</text><rect x="135" y="773.8" width="3" height="1" fill="#686868"/><rect x="135" y="783.8" width="3" height="1" fill="#686868"/><rect x="135" y="793.8" width="3" height="1" fill="#686868"/><rect x="135" y="803.8" width="3" height="1" fill="#686868"/><rect x="112" y="813.7" width="26" height="1.2" fill="#5e5e5e"/><text x="120.5" y="827.8" font-family="Liberation Sans, sans-serif" font-size="14.5" fill="#969696" >1</text><text x="120.5" y="839.2" font-family="Liberation Sans, sans-serif" font-size="14.5" fill="#969696" >6</text><text x="120.5" y="850.6" font-family="Liberation Sans, sans-serif" font-size="14.5" fill="#969696" >0</text><text x="120.5" y="862.0" font-family="Liberation Sans, sans-serif" font-size="14.5" fill="#969696" >0</text><rect x="135" y="823.8" width="3" height="1" fill="#686868"/><rect x="135" y="833.8" width="3" height="1" fill="#686868"/><rect x="135" y="843.8" width="3" height="1" fill="#686868"/><rect x="135" y="853.8" width="3" height="1" fill="#686868"/><rect x="112" y="863.7" width="26" height="1.2" fill="#5e5e5e"/><text x="120.5" y="877.8" font-family="Liberation Sans, sans-serif" font-size="14.5" fill="#969696" >1</text><text x="120.5" y="889.2" font-family="Liberation Sans, sans-serif" font-size="14.5" fill="#969696" >7</text><text x="120.5" y="900.6" font-family="Liberation Sans, sans-serif" font-size="14.5" fill="#969696" >0</text><text x="120.5" y="912.0" font-family="Liberation Sans, sans-serif" font-size="14.5" fill="#969696" >0</text><rect x="135" y="873.8" width="3" height="1" fill="#686868"/><rect x="135" y="883.8" width="3" height="1" fill="#686868"/><rect x="135" y="893.8" width="3" height="1" fill="#686868"/><rect x="135" y="903.8" width="3" height="1" fill="#686868"/><rect x="112" y="913.7" width="26" height="1.2" fill="#5e5e5e"/><text x="120.5" y="927.8" font-family="Liberation Sans, sans-serif" font-size="14.5" fill="#969696" >1</text><text x="120.5" y="939.2" font-family="Liberation Sans, sans-serif" font-size="14.5" fill="#969696" >8</text><text x="120.5" y="950.6" font-family="Liberation Sans, sans-serif" font-size="14.5" fill="#969696" >0</text><text x="120.5" y="962.0" font-family="Liberation Sans, sans-serif" font-size="14.5" fill="#969696" >0</text><rect x="135" y="923.8" width="3" height="1" fill="#686868"/><rect x="135" y="933.8" width="3" height="1" fill="#686868"/><rect x="135" y="943.8" width="3" height="1" fill="#686868"/><rect x="135" y="953.8" width="3" height="1" fill="#686868"/><rect x="112" y="963.7" width="26" height="1.2" fill="#5e5e5e"/><text x="120.5" y="977.8" font-family="Liberation Sans, sans-serif" font-size="14.5" fill="#969696" >1</text><text x="120.5" y="989.2" font-family="Liberation Sans, sans-serif" font-size="14.5" fill="#969696" >9</text><rect x="135" y="973.8" width="3" height="1" fill="#686868"/><rect x="138" y="162" width="0" height="0"/><path d="M113 153.600H137M129.800 136V162" stroke="#6a6a6a" stroke-width="1" stroke-dasharray="1 1.2" fill="none"/></svg>
<div class="a" style="left:111.500px;top:134px;width:1354.500px;height:1.200px;background:#3a3a3a;"></div><div class="a" id="vscroll"></div><div class="a" style="left:1462.300px;top:92px;width:1.200px;height:891px;background:#3d3d3d;"></div><div class="a" id="vthumb"></div>
<div class="a" id="status"></div><div class="a" id="zoombox"></div><div class="a" id="hscroll"></div><div class="a" id="hthumb"></div><div class="a" id="scorner"></div>
<span class="t" style="left:129.5px;top:986.2px;font-size:17px;line-height:17px;color:#e0e0e0;letter-spacing:-0.51px;font-family:'Liberation Sans',sans-serif;">50%</span>
<span class="t" style="left:209.7px;top:986.4px;font-size:17px;line-height:17px;color:#c4c4c4;letter-spacing:-0.29px;font-family:'Liberation Sans',sans-serif;">3553 px x 2000 px (300 ppi)</span>
<svg class="a" style="left:0;top:0" width="1466" height="1007" viewBox="0 0 1466 1007" fill="none" stroke-linecap="butt"><rect x="0" y="92" width="2" height="915" fill="#474747"/><rect x="55.5" y="252.5" width="47" height="36.5" rx="3.5" fill="#383838" stroke="#5c5c5c" stroke-width="0.8"/><g stroke="#d6d6d6" stroke-width="1.500"><path d="M29.500 146V163M21 154.300H38"/></g><path d="M29.500 142.900l3.900 4.900h-7.800zM29.500 165.700l3.900-4.900h-7.800zM18.100 154.300l4.900-3.900v7.800zM40.900 154.300l-4.900-3.900v7.800z" fill="#d6d6d6"/><path d="M49 163V168H44Z" fill="#b0b0b0"/><path d="M67.900 148V144.800H72.300M75.100 144.800H81.500M84.600 144.800H90V148M90 151.300V155.800M90 158.800V162.100H84.600M81.500 162.100H75.100M72.300 162.100H67.900V158.800M67.900 155.800V151.300" stroke="#d6d6d6" stroke-width="1.800"/><path d="M98 163V168H93Z" fill="#b0b0b0"/><g stroke="#d6d6d6" stroke-width="1.5"><ellipse cx="30.3" cy="190.2" rx="12" ry="8.2" transform="rotate(-14 30.3 190.2)"/><ellipse cx="22" cy="198" rx="3.2" ry="2.1" transform="rotate(-20 22 198)"/><path d="M24.5 196.5c2.5 2.5 2.2 6.5-1 9"/></g><path d="M49 202V207H44Z" fill="#b0b0b0"/><ellipse cx="72.300" cy="194" rx="6" ry="9.400" stroke="#d6d6d6" stroke-width="1.700" stroke-dasharray="1.600 1.650"/><path d="M92 182.300L92.200 188L87.900 192.500L85.100 190.100ZM84.900 190.300C80.500 190 79.500 194 79 197C78.600 199 77.500 200.300 76.400 200.900C82 201.600 87.600 199 88 192.700Z" fill="#d6d6d6" stroke="#535353" stroke-width="0.800" paint-order="stroke"/><path d="M98 202V207H93Z" fill="#b0b0b0"/><g stroke="#d6d6d6" stroke-width="2.100"><path d="M22.300 219.600V237.800H33M15.200 224.800H20M25.500 224.800H36.400V243.800M38.600 237.800H43"/></g><path d="M49 241V246H44Z" fill="#b0b0b0"/><rect x="68" y="222.6" width="22.6" height="18" fill="#707070" stroke="#d6d6d6" stroke-width="1.4"/><path d="M68 222.6L90.6 240.6M90.6 222.6L68 240.6" stroke="#d6d6d6" stroke-width="1.4"/><rect x="66.4" y="221.0" width="3.2" height="3.2" fill="#d6d6d6"/><rect x="89.0" y="221.0" width="3.2" height="3.2" fill="#d6d6d6"/><rect x="66.4" y="239.0" width="3.2" height="3.2" fill="#d6d6d6"/><rect x="89.0" y="239.0" width="3.2" height="3.2" fill="#d6d6d6"/><g transform="translate(29.600 269.800) rotate(45)"><rect x="-3.400" y="-15.200" width="6.800" height="9.500" rx="3.400" fill="#d6d6d6"/><rect x="-6.400" y="-8.600" width="12.800" height="4.400" fill="#d6d6d6"/><rect x="-3.800" y="-4.600" width="7.600" height="4.200" fill="#d6d6d6"/><path d="M-2.350 -1V11.800a2.350 2.350 0 0 0 4.700 0V-1" stroke="#d6d6d6" stroke-width="1.500"/></g><path d="M49 280V285H44Z" fill="#b0b0b0"/><g transform="translate(79.7 270) rotate(-45)"><rect x="-13.25" y="-4.9" width="26.5" height="9.8" rx="2.6" fill="#d6d6d6"/><rect x="-5.300000000000001" y="-4.9" width="10.600000000000001" height="9.8" fill="#d6d6d6"/><path d="M-5.70 -4.9V4.9M5.70 -4.9V4.9" stroke="#383838" stroke-width="1.200"/><circle cx="-2.70" cy="-2.65" r="0.85" fill="#383838"/><circle cx="-2.70" cy="0.00" r="0.85" fill="#383838"/><circle cx="-2.70" cy="2.65" r="0.85" fill="#383838"/><circle cx="0.00" cy="-2.65" r="0.85" fill="#383838"/><circle cx="0.00" cy="0.00" r="0.85" fill="#383838"/><circle cx="0.00" cy="2.65" r="0.85" fill="#383838"/><circle cx="2.70" cy="-2.65" r="0.85" fill="#383838"/><circle cx="2.70" cy="0.00" r="0.85" fill="#383838"/><circle cx="2.70" cy="2.65" r="0.85" fill="#383838"/></g><path d="M98 280V285H93Z" fill="#b0b0b0"/><g transform="translate(28.800 310.200) rotate(45)" stroke="#d6d6d6" stroke-width="1.500" stroke-linejoin="round"><path d="M-3.400 -13.200a1.200 1.200 0 0 1 1.200-1.200H2.200a1.200 1.200 0 0 1 1.200 1.200V9L0 16.200L-3.400 9Z"/><path d="M-3.400 -10.400H3.400M-3.400 9H3.400"/></g><path d="M49 319V324H44Z" fill="#b0b0b0"/><circle cx="78.500" cy="302.700" r="4.700" fill="#d6d6d6"/><path d="M76.700 306h3.600c-0.300 3 0.200 4.600 2.400 5.500l4.300 0.700c0.800 0.100 1.200 0.500 1.200 1.300v4.300H68.800v-4.300c0-0.800 0.400-1.200 1.200-1.300l4.300-0.700c2.200-0.900 2.700-2.500 2.400-5.500z" fill="#d6d6d6"/><rect x="69.200" y="319.100" width="18.600" height="1.900" fill="#d6d6d6"/><path d="M98 319V324H93Z" fill="#b0b0b0"/><path d="M41.200 337.600c-2.200 4.600-6.300 10-9.700 14.300l-2.900-2.300c3.400-4.200 8.300-9.200 12.600-12z" fill="#d6d6d6"/><path d="M27.900 350.400l3 2.400c0.600 4.800-4.600 8.400-11.200 8 2.200-1.200 2.600-2.800 3.200-4.600 0.800-2.800 2.400-5.200 5-5.800z" fill="#d6d6d6"/><path d="M36 338.500c-4.600-3.800-13.600-2.800-16.200 2.200-2 4 1.400 7.400 5 6.400 3-0.900 3.200-4.800 0.600-5.400-1.600-0.400-2.600 1-2 2.200M40.300 344.800c3.400 5.600-0.300 13.200-9.600 15" stroke="#d6d6d6" stroke-width="1.300"/><path d="M49 358V363H44Z" fill="#b0b0b0"/><path d="M82.300 338.800L89 344.800L79 353.500L74.200 348.600Z" fill="#d6d6d6"/><path d="M74.200 348.600L67.400 353.900L71.600 358.300L76.700 358L79 353.500M71.600 358.300H89.800" stroke="#d6d6d6" stroke-width="1.400" stroke-linejoin="round"/><path d="M98 358V363H93Z" fill="#b0b0b0"/><defs><linearGradient id="gr1" x1="0" x2="1" y1="0" y2="0"><stop offset="0.050" stop-color="#151515"/><stop offset="1" stop-color="#e4e4e4"/></linearGradient></defs><rect x="18.700" y="378.600" width="22.300" height="17.200" fill="url(#gr1)" stroke="#d6d6d6" stroke-width="1.700"/><path d="M49 397V402H44Z" fill="#b0b0b0"/><path d="M75.200 376.400c3.600-0.500 8.600-0.500 12-0.200 1.200 4 1.400 8.200 0.600 11.400-1.200 3.400-4.600 5.800-8 6-0.600-0.100-0.800-0.400-0.600-0.900 1.400-1.400 2.800-3.200 3.400-5.200l-1-0.600c-2.600 3.600-5.600 7.400-8.400 9.800-2.200 1.800-4.800-0.600-3-2.600 2.600-2.800 5-6.400 7.200-10.200l-0.800-0.500c-1 1.800-2.200 3.600-3.600 5-0.500 0.300-0.900 0.100-1-0.400-0.300-1.300-0.400-2.600-0.300-3.600-1-0.800-1-2.400-0.700-3.600 0.600-2.200 2-3.600 4.200-4.400z" fill="#d6d6d6"/><path d="M98 397V402H93Z" fill="#b0b0b0"/><circle cx="33" cy="422.800" r="8.100" fill="#d6d6d6"/><path d="M28.300 428.800L18.900 437" stroke="#d6d6d6" stroke-width="2.500"/><path d="M49 436V441H44Z" fill="#b0b0b0"/><g transform="translate(79 426.600) rotate(45) scale(0.950)"><path d="M-4.700 -12.200h9.400v5h-9.400z" fill="#d6d6d6"/><path d="M-4.200 -7C-7 -3.500-7.800 -1-7.400 1.800L-1 13.200Q0 14.200 1 13.200L7.400 1.800C7.800 -1 7 -3.500 4.200 -7Z" stroke="#d6d6d6" stroke-width="1.400" stroke-linejoin="round"/><path d="M0 13V2" stroke="#d6d6d6" stroke-width="1.200"/><circle cx="0" cy="1.600" r="2.100" fill="#d6d6d6"/></g><path d="M98 436V441H93Z" fill="#b0b0b0"/><path d="M20.300 455.800h19.800v5.400h-1.900c-0.200-2-0.800-2.800-2.600-2.800h-3.800v14.600c0 1.200 0.600 1.500 2.800 1.600v1.800H25.800v-1.800c2.200-0.100 2.800-0.400 2.800-1.600V458.400h-3.800c-1.800 0-2.400 0.800-2.600 2.800h-1.900z" fill="#d6d6d6" stroke="#d6d6d6" stroke-width="0.300"/><path d="M49 475V480H44Z" fill="#b0b0b0"/><path d="M70.800 453.600L85.800 467.600L79.600 468.200L83.400 476.200L80.400 477.600L76.600 469.600L71.600 473.600Z" fill="#d6d6d6"/><path d="M98 475V480H93Z" fill="#b0b0b0"/><rect x="18.6" y="495.800" width="22.600" height="17.200" fill="#6e6e6e" stroke="#d6d6d6" stroke-width="1.3"/><path d="M49 514V519H44Z" fill="#b0b0b0"/><path d="M70.500 499c3-6.500 10.500-8.500 16-4.500" stroke="#d6d6d6" stroke-width="1.400"/><path d="M92.200 497.400l-8.200 0.600 5-5.800z" fill="#d6d6d6"/><path d="M82 496.500l8.600 10.500-8.600 10.500z" fill="#d6d6d6"/><path d="M72.500 516.800c-1.800-1.800-3.600-5-5.200-8.200 1.200-1.200 2.800-0.600 4.400 2.200V501.500c0-1.600 2.200-1.600 2.200 0v6.500-8.500c0-1.600 2.300-1.600 2.300 0v8.500-7.800c0-1.600 2.300-1.600 2.300 0v8.300-5.600c0-1.600 2.200-1.600 2.200 0v8.600c0 2.600-0.600 4-1.600 5.400z" fill="#d6d6d6" stroke="#535353" stroke-width="0.700"/><path d="M98 514V519H93Z" fill="#b0b0b0"/><circle cx="27.300" cy="540.500" r="8.400" stroke="#d6d6d6" stroke-width="2"/><path d="M33.600 547L40.800 554.600" stroke="#d6d6d6" stroke-width="3" stroke-linecap="round"/><path d="M26 535.300c2.400-0.300 4.600 1 5.500 3.300" stroke="#d6d6d6" stroke-width="1.200"/><circle cx="69.5" cy="544.100" r="2.600" fill="#d6d6d6"/><circle cx="78.4" cy="544.100" r="2.600" fill="#d6d6d6"/><circle cx="87.1" cy="544.100" r="2.600" fill="#d6d6d6"/><path d="M98 553V558H93Z" fill="#b0b0b0"/><rect x="49" y="599" width="38" height="37.500" fill="#fff" stroke="#2c2c2c" stroke-width="1.200"/><rect x="26.800" y="575" width="37.800" height="37.500" fill="#fff" stroke="#2c2c2c" stroke-width="1.200"/><path d="M79 580.800H87.200V587" stroke="#d6d6d6" stroke-width="1.600"/><path d="M76 580.800l4.600-3.600v7.200zM87.200 589.600l-3.600-4.400h7.200z" fill="#d6d6d6"/><rect x="32" y="630.200" width="10.800" height="10.800" fill="#dcdcdc"/><rect x="27.600" y="625.500" width="10" height="10" fill="#111" stroke="#dcdcdc" stroke-width="1.300"/><rect x="17.300" y="657.300" width="24.200" height="18" stroke="#d6d6d6" stroke-width="1.200"/><circle cx="29.400" cy="666.300" r="6" stroke="#d6d6d6" stroke-width="1.300" stroke-dasharray="1.500 1.640"/><rect x="66.700" y="661.300" width="16.600" height="13.500" stroke="#d6d6d6" stroke-width="1.300"/><rect x="66" y="660.600" width="18" height="2.600" fill="#d6d6d6"/><rect x="74" y="656.900" width="16.600" height="13" fill="#535353" stroke="#d6d6d6" stroke-width="1.300"/><rect x="73.400" y="656.200" width="17.800" height="2.600" fill="#d6d6d6"/><path d="M98 676V681H93Z" fill="#b0b0b0"/><path d="M42.500 51.800L55.200 63.200H51.800V73.800H45.400V66.600H39.600V73.800H33.200V63.200H29.800Z" fill="#d6d6d6"/><g transform="translate(105.7 63) rotate(-45)"><rect x="-13.5" y="-4.9" width="27" height="9.8" rx="2.6" fill="#d6d6d6"/><rect x="-5.4" y="-4.9" width="10.8" height="9.8" fill="#d6d6d6"/><path d="M-5.80 -4.9V4.9M5.80 -4.9V4.9" stroke="#535353" stroke-width="1.200"/><circle cx="-2.70" cy="-2.65" r="0.85" fill="#535353"/><circle cx="-2.70" cy="0.00" r="0.85" fill="#535353"/><circle cx="-2.70" cy="2.65" r="0.85" fill="#535353"/><circle cx="0.00" cy="-2.65" r="0.85" fill="#535353"/><circle cx="0.00" cy="0.00" r="0.85" fill="#535353"/><circle cx="0.00" cy="2.65" r="0.85" fill="#535353"/><circle cx="2.70" cy="-2.65" r="0.85" fill="#535353"/><circle cx="2.70" cy="0.00" r="0.85" fill="#535353"/><circle cx="2.70" cy="2.65" r="0.85" fill="#535353"/></g><path d="M131.6 63l4.8 5l4.8 -5" stroke="#c6c6c6" stroke-width="1.15"/><path d="M213.6 63l4.8 5l4.8 -5" stroke="#c6c6c6" stroke-width="1.15"/><path d="M495.5 64.2l4.8 5l4.8 -5" stroke="#c6c6c6" stroke-width="1.15"/><path d="M1116.5 64.2l4.8 5l4.8 -5" stroke="#c6c6c6" stroke-width="1.15"/><path d="M764.8 64l4.0 4.5l4.0 -4.5" stroke="#666" stroke-width="1.2"/><path d="M243.800 51h11.900v3.400h13.500v21H243.800z" fill="#d6d6d6"/><circle cx="256.500" cy="60.300" r="2.900" fill="#535353"/><path d="M255.300 62h2.400l0.400 4.200h4.200v3.200h-11.600v-3.200h4.200z" fill="#535353"/><rect x="250.700" y="70.300" width="11.600" height="1.300" fill="#535353"/><circle cx="623.500" cy="63.400" r="10.200" stroke="#d6d6d6" stroke-width="1.300"/><circle cx="623.500" cy="63.400" r="4.600" stroke="#d6d6d6" stroke-width="1.300"/><path d="M623.500 53.200v8.200M623.500 65.400v8.200M613.300 63.400h8.200M625.500 63.400h8.200" stroke="#d6d6d6" stroke-width="1.300"/><rect x="663.500" y="60.600" width="14" height="13.800" fill="#d6d6d6" stroke="#d6d6d6" stroke-width="1.200"/><path d="M664.500 73.400L676.500 61.400" stroke="#464646" stroke-width="3"/><path d="M676.300 67.500V73.200H670.500Z" fill="#464646"/><g transform="translate(681.600 57.400) rotate(45)"><rect x="-2.300" y="-8.600" width="4.600" height="5.600" rx="2.300" fill="#d6d6d6"/><rect x="-3.900" y="-4.200" width="7.800" height="2.300" fill="#d6d6d6"/><path d="M-1.700 -2V6.200a1.700 1.700 0 0 0 3.400 0V-2" stroke="#d6d6d6" stroke-width="1.100" fill="#464646"/></g><rect x="800.900" y="60.600" width="6.200" height="12.400" fill="#d6d6d6"/><rect x="803.100" y="52.900" width="6.100" height="6" fill="#d6d6d6"/><rect x="810.900" y="51.400" width="1.300" height="22.700" fill="#d6d6d6"/><rect x="813.900" y="60.600" width="6.200" height="12.400" fill="#d6d6d6"/><rect x="817" y="52.900" width="6.100" height="6" fill="#d6d6d6"/><path d="M850.500 70.300a9.700 9.700 0 1 1 15.200-5.500" stroke="#d6d6d6" stroke-width="1.500"/><path d="M866.600 64.800c-0.600 5.200-4 7.800-8.800 8.400v3.600l-6.100-5.200 6.100-4.900v3.300c3.300-0.300 6-1.800 8.800-5.200z" fill="#d6d6d6"/><path d="M856.200 57.200v5.900h5.900" stroke="#d6d6d6" stroke-width="1.900"/><circle cx="1162" cy="63.500" r="7.600" stroke="#8c8c8c" stroke-width="1.500"/><path d="M1156.600 58.100a7.600 7.600 0 0 0 10.800 10.800z" fill="#8c8c8c"/><path d="M1152.800 54.600L1171.500 72.200" stroke="#8c8c8c" stroke-width="1.700"/><path d="M1214 56.800L1200.500 69.200H1218.500" stroke="#d6d6d6" stroke-width="1.600" stroke-linejoin="miter"/><path d="M1209 61.500c2.400 2 3.600 4.600 3.800 7.600" stroke="#d6d6d6" stroke-width="1.300"/><path d="M1328.500 56.500a9.800 9.800 0 1 0 4.600 6.200" stroke="#d6d6d6" stroke-width="1.500"/><path d="M1325 60.500a5.200 5.200 0 1 0 3.600 3.600" stroke="#d6d6d6" stroke-width="1.400"/><g transform="translate(1330.500 56.500) rotate(45)"><rect x="-2.200" y="-8" width="4.400" height="9.500" fill="#d6d6d6"/><path d="M-2.200 2.500h4.400L0 6.500z" fill="#d6d6d6"/><rect x="-2.200" y="-10.400" width="4.400" height="1.600" fill="#d6d6d6"/></g><path d="M400.600 108.800l9.200 9.200M409.800 108.800l-9.200 9.200" stroke="#c8c8c8" stroke-width="1.500"/><path d="M1447 153l4.600-4.600 4.600 4.600" stroke="#8a8a8a" stroke-width="1.300"/><path d="M1446.600 964.500l4.600 4.600 4.600-4.600" stroke="#8a8a8a" stroke-width="1.300"/><path d="M476.500 992l-4.200 4.600 4.200 4.600M1420.500 992l4.200 4.600-4.200 4.600" stroke="#8a8a8a" stroke-width="1.300"/><path d="M445 989.400l4.800 6.600-4.800 6.600" stroke="#b4b4b4" stroke-width="1.300"/></svg>
<div class="a" id="flyout" style="left:103px;top:252.500px;width:301px;height:147.500px;background:#535353;border:3px solid #464646;box-sizing:border-box;box-shadow:0 0 0 0.500px #3a3a3a;"></div>
<span class="t" style="left:168.4px;top:262.9px;font-size:16.8px;line-height:16.8px;color:#ececec;letter-spacing:-0.47px;font-family:'Liberation Sans',sans-serif;">Spot Healing Brush Tool</span>
<span class="t" style="left:382.8px;top:261.9px;font-size:17.4px;line-height:17.4px;color:#e4e4e4;letter-spacing:0.00px;font-family:'Liberation Sans',sans-serif;transform:scaleX(0.880);transform-origin:left;">J</span>
<span class="t" style="left:168.4px;top:291.4px;font-size:16.8px;line-height:16.8px;color:#ececec;letter-spacing:-0.51px;font-family:'Liberation Sans',sans-serif;">Healing Brush Tool</span>
<span class="t" style="left:382.8px;top:290.4px;font-size:17.4px;line-height:17.4px;color:#e4e4e4;letter-spacing:0.00px;font-family:'Liberation Sans',sans-serif;transform:scaleX(0.880);transform-origin:left;">J</span>
<span class="t" style="left:168.4px;top:319.3px;font-size:16.8px;line-height:16.8px;color:#ececec;letter-spacing:-0.45px;font-family:'Liberation Sans',sans-serif;">Patch Tool</span>
<span class="t" style="left:382.8px;top:318.3px;font-size:17.4px;line-height:17.4px;color:#e4e4e4;letter-spacing:0.00px;font-family:'Liberation Sans',sans-serif;transform:scaleX(0.880);transform-origin:left;">J</span>
<span class="t" style="left:168.4px;top:348.8px;font-size:16.8px;line-height:16.8px;color:#ececec;letter-spacing:-0.40px;font-family:'Liberation Sans',sans-serif;">Content-Aware Move Tool</span>
<span class="t" style="left:382.8px;top:347.8px;font-size:17.4px;line-height:17.4px;color:#e4e4e4;letter-spacing:0.00px;font-family:'Liberation Sans',sans-serif;transform:scaleX(0.880);transform-origin:left;">J</span>
<span class="t" style="left:168.4px;top:375.6px;font-size:16.8px;line-height:16.8px;color:#ececec;letter-spacing:-0.68px;font-family:'Liberation Sans',sans-serif;">Red Eye Tool</span>
<span class="t" style="left:382.8px;top:374.6px;font-size:17.4px;line-height:17.4px;color:#e4e4e4;letter-spacing:0.00px;font-family:'Liberation Sans',sans-serif;transform:scaleX(0.880);transform-origin:left;">J</span><svg class="a" style="left:0;top:0" width="1466" height="1007" viewBox="0 0 1466 1007" fill="none"><path d="M139.800 271.500a5.600 6.600 0 1 1 9.500-9.500" stroke="#d6d6d6" stroke-width="1.200" stroke-dasharray="1.300 1.500"/><g transform="translate(149.8 268.6) rotate(-45)"><rect x="-12.75" y="-4.6" width="25.5" height="9.2" rx="2.6" fill="#d6d6d6"/><rect x="-5.1000000000000005" y="-4.6" width="10.200000000000001" height="9.2" fill="#d6d6d6"/><path d="M-5.48 -4.6V4.6M5.48 -4.6V4.6" stroke="#535353" stroke-width="1.200"/><circle cx="-2.70" cy="-2.48" r="0.85" fill="#535353"/><circle cx="-2.70" cy="0.00" r="0.85" fill="#535353"/><circle cx="-2.70" cy="2.48" r="0.85" fill="#535353"/><circle cx="0.00" cy="-2.48" r="0.85" fill="#535353"/><circle cx="0.00" cy="0.00" r="0.85" fill="#535353"/><circle cx="0.00" cy="2.48" r="0.85" fill="#535353"/><circle cx="2.70" cy="-2.48" r="0.85" fill="#535353"/><circle cx="2.70" cy="0.00" r="0.85" fill="#535353"/><circle cx="2.70" cy="2.48" r="0.85" fill="#535353"/></g><g transform="translate(149.6 298.4) rotate(-45)"><rect x="-12.75" y="-4.6" width="25.5" height="9.2" rx="2.6" fill="#d6d6d6"/><rect x="-5.1000000000000005" y="-4.6" width="10.200000000000001" height="9.2" fill="#d6d6d6"/><path d="M-5.48 -4.6V4.6M5.48 -4.6V4.6" stroke="#535353" stroke-width="1.200"/><circle cx="-2.70" cy="-2.48" r="0.85" fill="#535353"/><circle cx="-2.70" cy="0.00" r="0.85" fill="#535353"/><circle cx="-2.70" cy="2.48" r="0.85" fill="#535353"/><circle cx="0.00" cy="-2.48" r="0.85" fill="#535353"/><circle cx="0.00" cy="0.00" r="0.85" fill="#535353"/><circle cx="0.00" cy="2.48" r="0.85" fill="#535353"/><circle cx="2.70" cy="-2.48" r="0.85" fill="#535353"/><circle cx="2.70" cy="0.00" r="0.85" fill="#535353"/><circle cx="2.70" cy="2.48" r="0.85" fill="#535353"/></g><rect x="115.100" y="293.500" width="5.900" height="5.900" fill="#f4f4f4"/><rect x="140.800" y="323.300" width="15" height="11" fill="#777" stroke="#d6d6d6" stroke-width="1.300" stroke-dasharray="1.400 1.200"/><g stroke="#d6d6d6" stroke-width="1.200"><path d="M136.200 325.500h4M136.200 329h4M136.200 332.500h4M156.400 325.500h4M156.400 329h4M156.400 332.500h4M144.300 334.500v3M148.300 334.500v3M152.300 334.500v3"/></g><g stroke="#d6d6d6" stroke-width="2"><path d="M137.500 349.200c6-1.600 8.500 1.200 11 5.800s5.500 7.600 9.800 6.200"/><path d="M160 348.600c-5.500-1.600-8.500 1.200-11 5.800s-5 7.600-9 6.600"/></g><path d="M161.500 360.500l-5.800 4.500-1-7.600zM137 361.600l5.600-4.800 1.200 7.600z" fill="#d6d6d6"/><path d="M139 372v12.500M132.800 378.200h12.500" stroke="#d6d6d6" stroke-width="1.200"/><path d="M143.500 386c4-7 14-7 18 0-4 6.600-14 6.600-18 0z" fill="#d6d6d6"/><circle cx="152.500" cy="385.700" r="3.300" fill="#535353"/><circle cx="153.600" cy="384.600" r="1" fill="#d6d6d6"/><rect x="106" y="282.200" width="297.300" height="34.700" rx="1.500" stroke="#e30606" stroke-width="8.200" stroke-linejoin="round"/><defs><filter id="ash" x="-5%" y="-5%" width="110%" height="115%"><feGaussianBlur stdDeviation="1.200"/></filter></defs><g transform="translate(410.5 299.2) rotate(30.63)"><g opacity="0.300" filter="url(#ash)" transform="translate(1.200 2.200)"><path d="M0 -0.500L310.8 -7.600L322.8 0L310.8 7.600L0 0.500Z" fill="#700000"/><path d="M302.3 -16L324.6 0L301.8 14.600" stroke="#700000" stroke-width="7.600" stroke-linecap="round" stroke-linejoin="miter" stroke-miterlimit="10"/></g><path d="M0 -0.500L310.8 -7.600L322.8 0L310.8 7.600L0 0.500Z" fill="#e30606"/><path d="M302.3 -16L324.6 0L301.8 14.600" stroke="#e30606" stroke-width="7.600" stroke-linecap="round" stroke-linejoin="miter" stroke-miterlimit="10"/></g><ellipse cx="754.500" cy="488.600" rx="53.600" ry="30.400" stroke="#8a0000" stroke-width="5.800" opacity="0.300" filter="url(#ash)" transform="translate(0 1.500)"/><ellipse cx="754.500" cy="488.600" rx="53.600" ry="30.400" stroke="#e30606" stroke-width="5.800"/></svg>
</body></html>
